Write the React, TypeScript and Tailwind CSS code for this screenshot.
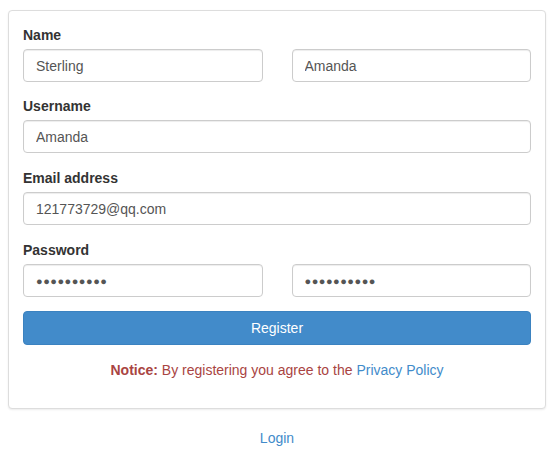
import React from 'react';

const inputCls =
  'block w-full h-[33px] px-3 rounded-[4px] border border-[#ccc] bg-white text-[14px] text-[#555] outline-none shadow-[inset_0_1px_1px_rgba(0,0,0,0.075)]';

function Label({ children }: { children: React.ReactNode }) {
  return (
    <label className="block mb-[4px] text-[14px] leading-[20px] font-bold text-[#333]">
      {children}
    </label>
  );
}

const DOTS = '●●●●●●●●●●';

export default function App() {
  return (
    <div
      className="bg-white min-h-[452px] pt-[10px] px-2 text-[14px] text-[#333]"
      style={{ fontFamily: '"Liberation Sans", Arial, sans-serif' }}
    >
      <div className="border border-[#ddd] rounded-[4px] bg-white shadow-[0_1px_2px_rgba(0,0,0,0.08)] p-[14px]">
        <div className="mb-[14px]">
          <Label>Name</Label>
          <div className="grid grid-cols-2 gap-[29px]">
            <input className={inputCls} defaultValue="Sterling" />
            <input className={inputCls} defaultValue="Amanda" />
          </div>
        </div>

        <div className="mb-[15px]">
          <Label>Username</Label>
          <input className={inputCls} defaultValue="Amanda" />
        </div>

        <div className="mb-[15px]">
          <Label>Email address</Label>
          <input className={inputCls} defaultValue="121773729@qq.com" />
        </div>

        <div>
          <Label>Password</Label>
          <div className="grid grid-cols-2 gap-[29px]">
            <input readOnly className={`${inputCls} !text-[11px] tracking-[0.5px]`} value={DOTS} />
            <input readOnly className={`${inputCls} !text-[11px] tracking-[0.5px]`} value={DOTS} />
          </div>
        </div>

        <button className="mt-[14px] w-full h-[34px] rounded-[4px] bg-[#428bca] text-white text-[14px] border border-[#3b82c0]">
          Register
        </button>

        <p className="mt-[15px] mb-[14px] text-center leading-[20px] text-[#a94442]">
          <b>Notice:</b> By registering you agree to the{' '}
          <a className="text-[#428bca]">Privacy Policy</a>
        </p>
      </div>

      <div className="mt-[19px] text-center leading-[20px]">
        <a className="text-[#428bca]">Login</a>
      </div>
    </div>
  );
}
